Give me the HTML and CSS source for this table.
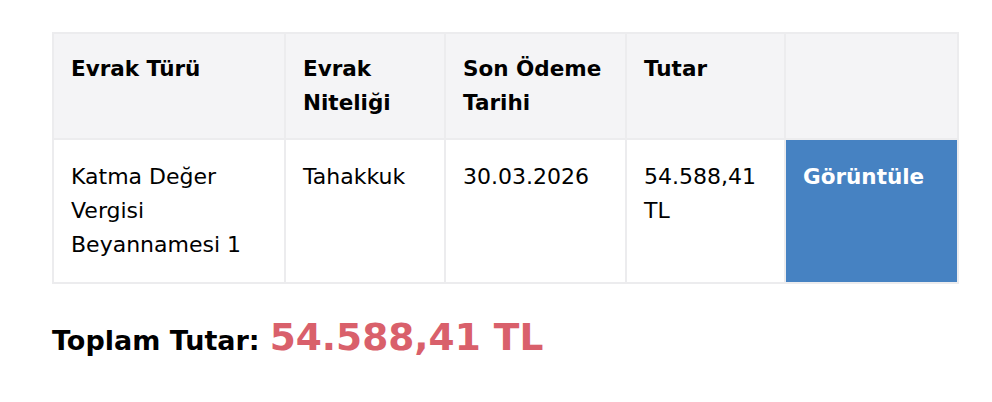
FILE: index.html
```html
<!DOCTYPE html>
<html lang="tr">
<head>
<meta charset="utf-8">
<link rel="stylesheet" href="styles.css">
</head>
<body>
<div class="page">
  <table class="docs">
    <colgroup>
      <col class="c1"><col class="c2"><col class="c3"><col class="c4"><col class="c5">
    </colgroup>
    <thead>
      <tr>
        <th>Evrak Türü</th>
        <th>Evrak Niteliği</th>
        <th>Son Ödeme Tarihi</th>
        <th>Tutar</th>
        <th></th>
      </tr>
    </thead>
    <tbody>
      <tr>
        <td>Katma Değer Vergisi Beyannamesi 1</td>
        <td>Tahakkuk</td>
        <td>30.03.2026</td>
        <td>54.588,41 TL</td>
        <td class="action"><a class="view" href="#">Görüntüle</a></td>
      </tr>
    </tbody>
  </table>
  <div class="total">
    <span class="total-label">Toplam Tutar:</span>
    <span class="total-value">54.588,41 TL</span>
  </div>
</div>
</body>
</html>
```
FILE: styles.css
```css
html, body {
  margin: 0;
  padding: 0;
  background: #ffffff;
}
body {
  font-family: "DejaVu Sans", Verdana, sans-serif;
  color: #000;
}
.page {
  padding: 32px 35px 0 52px;
}
.docs {
  border-collapse: collapse;
  width: 905px;
  table-layout: fixed;
  font-size: 22px;
  line-height: 34px;
}
.c1 { width: 232px; }
.c2 { width: 160px; }
.c3 { width: 181px; }
.c4 { width: 159px; }
.c5 { width: 173px; }
.docs th, .docs td {
  border: 2px solid #ececee;
  padding: 18px 17px;
  text-align: left;
  vertical-align: top;
}
.docs td {
  padding-top: 20px;
  padding-bottom: 20px;
}
.docs th {
  background: #f4f4f6;
  font-weight: bold;
  font-size: 21.5px;
}
.docs td.action {
  background: #4682c2;
}
.view {
  color: #ffffff;
  font-weight: bold;
  font-size: 21.5px;
  text-decoration: none;
}
.total {
  margin-top: 31px;
  display: flex;
  align-items: baseline;
  gap: 10px;
}
.total-label {
  font-size: 27px;
  font-weight: bold;
}
.total-value {
  font-size: 37.5px;
  font-weight: bold;
  color: #d9606b;
}
```
